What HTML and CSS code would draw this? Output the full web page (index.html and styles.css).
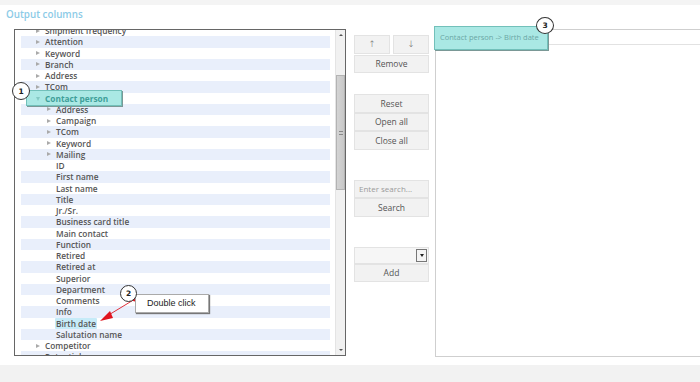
FILE: index.html
```html
<!DOCTYPE html>
<html>
<head>
<meta charset="utf-8">
<link rel="stylesheet" href="styles.css">
</head>
<body>
<div class="topbar"></div>
<div class="title">Output columns</div>
<div class="main">
  <div class="tree">
    <div class="list">
      <div class="rows">
        <div class="row l1"><i class="tri"></i>Shipment frequency</div>
        <div class="row l1"><i class="tri"></i>Attention</div>
        <div class="row l1"><i class="tri"></i>Keyword</div>
        <div class="row l1"><i class="tri"></i>Branch</div>
        <div class="row l1"><i class="tri"></i>Address</div>
        <div class="row l1"><i class="tri"></i>TCom</div>
        <div class="row l1 covered"></div>
        <div class="row l2"><i class="tri"></i>Address</div>
        <div class="row l2"><i class="tri"></i>Campaign</div>
        <div class="row l2"><i class="tri"></i>TCom</div>
        <div class="row l2"><i class="tri"></i>Keyword</div>
        <div class="row l2"><i class="tri"></i>Mailing</div>
        <div class="row leaf">ID</div>
        <div class="row leaf">First name</div>
        <div class="row leaf">Last name</div>
        <div class="row leaf">Title</div>
        <div class="row leaf">Jr./Sr.</div>
        <div class="row leaf">Business card title</div>
        <div class="row leaf">Main contact</div>
        <div class="row leaf">Function</div>
        <div class="row leaf">Retired</div>
        <div class="row leaf">Retired at</div>
        <div class="row leaf">Superior</div>
        <div class="row leaf">Department</div>
        <div class="row leaf">Comments</div>
        <div class="row leaf">Info</div>
        <div class="row leaf"><span class="sel">Birth date</span></div>
        <div class="row leaf">Salutation name</div>
        <div class="row l1"><i class="tri"></i>Competitor</div>
        <div class="row l1"><i class="tri"></i>Potential</div>
      </div>
    </div>
    <div class="scroll">
      <div class="sarrow up"></div>
      <div class="track"><div class="thumb"><span class="grip"></span></div></div>
      <div class="sarrow down"></div>
    </div>
  </div>

  <div class="buttons">
    <div class="pair">
      <div class="btn arr">↑</div>
      <div class="btn arr">↓</div>
    </div>
    <div class="btn">Remove</div>
    <div class="btn gap1">Reset</div>
    <div class="btn">Open all</div>
    <div class="btn">Close all</div>
    <div class="btn input gap2">Enter search...</div>
    <div class="btn">Search</div>
    <div class="btn select gap2"><span class="dd"><i class="ddtri"></i></span></div>
    <div class="btn">Add</div>
  </div>

  <div class="panel">
    <div class="phead"></div>
  </div>
</div>
<div class="bottombar"></div>

<div class="callout c1">Contact person</div>
<div class="badge b1">1</div>

<svg class="arrow" width="60" height="40" viewBox="0 0 60 40">
  <line x1="37" y1="5" x2="9" y2="22" stroke="#e0303a" stroke-width="1"/>
  <polygon points="2,27 12,17 15,24" fill="#e0141e"/>
  <circle cx="37" cy="5" r="2.5" fill="#e0141e"/>
</svg>
<div class="note">Double click</div>
<div class="badge b2">2</div>

<div class="callout c3">Contact person -&gt; Birth date</div>
<div class="badge b3">3</div>
</body>
</html>
```

FILE: styles.css
```css
* { box-sizing: border-box; }
html, body { margin: 0; padding: 0; }
body {
  width: 700px;
  height: 382px;
  overflow: hidden;
  background: #fff;
  font-family: "Open Sans", "DejaVu Sans", sans-serif;
  position: relative;
}
.topbar { height: 5px; background: #f4f4f4; }
.title {
  height: 24px;
  padding-left: 6px;
  line-height: 19px;
  font-size: 9.8px;
  font-weight: 600;
  color: #8ccbe7;
}
.main {
  display: flex;
  height: 328px;
  padding-left: 14px;
}
.tree {
  width: 332px;
  height: 327px;
  border: 1px solid #666;
  display: flex;
  background: #fff;
}
.list {
  flex: 1;
  overflow: hidden;
  padding-left: 6px;
}
.rows { margin-top: -5px; width: 309px; }
.row {
  height: 11.25px;
  line-height: 11.25px;
  font-size: 8.3px;
  font-weight: 600;
  color: #555;
  display: flex;
  align-items: center;
  white-space: nowrap;
}
.row:nth-child(even) { background: #e9effb; }
.row.l1 { padding-left: 15px; }
.row.l2 { padding-left: 26px; }
.row.leaf { padding-left: 35px; }
.tri {
  display: inline-block;
  width: 0; height: 0;
  border-left: 4px solid #aaa;
  border-top: 2.5px solid transparent;
  border-bottom: 2.5px solid transparent;
  margin-right: 5px;
}
.sel {
  background: #c6ebf8;
  padding: 0 1px;
  margin-left: -1px;
  border-radius: 1px;
}
.scroll {
  width: 10px;
  background: #f1f1f1;
  border-left: 1px solid #e4e4e4;
  display: flex;
  flex-direction: column;
}
.sarrow {
  height: 10px;
  display: flex;
  align-items: center;
  justify-content: center;
}
.sarrow::after {
  content: "";
  width: 0; height: 0;
  border-left: 2px solid transparent;
  border-right: 2px solid transparent;
}
.sarrow.up::after { border-bottom: 2px solid #555; }
.sarrow.down::after { border-top: 2px solid #555; }
.track { flex: 1; }
.thumb {
  margin-top: 35px;
  height: 115px;
  background: linear-gradient(to right, #d4d4d4, #c8c8c8);
  border: 1px solid #b3b3b3;
  display: flex;
  align-items: center;
  justify-content: center;
}
.grip {
  width: 4px;
  height: 4px;
  border-top: 1px solid #888;
  border-bottom: 1px solid #888;
}
.buttons {
  margin-left: 8px;
  width: 75px;
  padding-top: 6px;
  display: flex;
  flex-direction: column;
}
.pair { display: flex; gap: 3px; margin-bottom: 1px; }
.pair .btn { width: 36px; }
.btn {
  height: 18.5px;
  border: 1px solid #e3e3e3;
  background: #f2f2f2;
  font-size: 8.5px;
  color: #555;
  display: flex;
  align-items: center;
  justify-content: center;
}
.btn.arr {
  font-family: "DejaVu Sans", sans-serif;
  font-weight: 300;
  font-size: 9px;
  color: #666;
}
.gap1 { margin-top: 21px; }
.gap2 { margin-top: 30px; }
.btn.input {
  justify-content: flex-start;
  padding-left: 4px;
  color: #9a9a9a;
  font-size: 8px;
}
.btn.select {
  background: #f6f6f6;
  justify-content: flex-end;
  padding-right: 1px;
  height: 17px;
}
.dd {
  width: 11px;
  height: 13px;
  border: 1px solid #777;
  background: #f4f4f4;
  display: flex;
  align-items: center;
  justify-content: center;
}
.ddtri {
  width: 0; height: 0;
  border-left: 2.5px solid transparent;
  border-right: 2.5px solid transparent;
  border-top: 3px solid #222;
}
.panel {
  margin-left: 6px;
  flex: 1;
  margin-right: -20px;
  height: 328px;
  border: 1px solid #cfcfcf;
}
.phead { height: 15px; border-bottom: 1px solid #e2e2e2; }
.bottombar { margin-top: 8px; height: 17px; background: #f2f2f2; }

.callout {
  position: absolute;
  background: #aae8e4;
  border: 1px solid #72c0ba;
  box-shadow: 1px 1px 0 #7a9896;
  white-space: nowrap;
}
.c1 {
  left: 26px; top: 90px; width: 96px; height: 16px;
  font-size: 8.3px; font-weight: 700; color: #3f9f99;
  padding-left: 18px; line-height: 15px;
}
.c1::before {
  content: "";
  position: absolute;
  left: 9px; top: 6px;
  border-left: 2.5px solid transparent;
  border-right: 2.5px solid transparent;
  border-top: 4px solid #84c9c4;
}
.c3 {
  left: 434px; top: 26px; width: 114px; height: 24px;
  font-size: 7.5px; color: #6aa7a5;
  padding-left: 5px; line-height: 20px;
}
.badge {
  position: absolute;
  border: 1.5px solid #333;
  border-radius: 50%;
  background: #fff;
  font-family: "DejaVu Sans", sans-serif;
  font-weight: 700;
  font-size: 7.5px;
  color: #222;
  display: flex;
  align-items: center;
  justify-content: center;
}
.b1 { left: 12px; top: 82px; width: 18px; height: 18px; }
.b2 { left: 120px; top: 285px; width: 17px; height: 17px; }
.b3 { left: 536px; top: 17px; width: 18px; height: 17px; }
.note {
  position: absolute;
  left: 135px; top: 294px;
  width: 74px; height: 19px;
  background: #fff;
  border: 1px solid #aaa;
  box-shadow: 1px 1px 1px #777;
  font-family: "Liberation Sans", Arial, sans-serif;
  font-size: 9px;
  color: #222;
  padding-left: 11px;
  line-height: 17px;
}
.arrow { position: absolute; left: 98px; top: 294px; }
```
